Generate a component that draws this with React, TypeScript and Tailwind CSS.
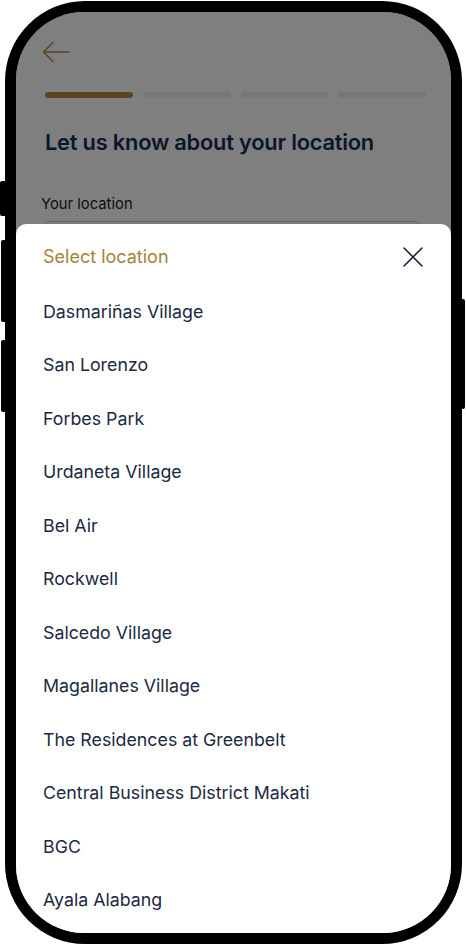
import React from 'react';

const locations = [
  'Dasmariñas Village',
  'San Lorenzo',
  'Forbes Park',
  'Urdaneta Village',
  'Bel Air',
  'Rockwell',
  'Salcedo Village',
  'Magallanes Village',
  'The Residences at Greenbelt',
  'Central Business District Makati',
  'BGC',
  'Ayala Alabang',
];

function BackArrow() {
  return (
    <svg width="28" height="22" viewBox="0 0 28 22" fill="none" stroke="#B58A41" strokeWidth="1.6" strokeLinecap="round" strokeLinejoin="round">
      <path d="M27 11H1.5M11 1.5L1.5 11l9.5 9.5" />
    </svg>
  );
}

function CloseIcon() {
  return (
    <svg width="20" height="20" viewBox="0 0 20 20" fill="none" stroke="#14243A" strokeWidth="1.6" strokeLinecap="round">
      <path d="M1 1l18 18M19 1L1 19" />
    </svg>
  );
}

export default function App() {
  return (
    <div className="relative h-[945px] w-[466px] bg-white font-['Inter',sans-serif]">
      {/* side buttons */}
      <div className="absolute left-0 top-[181px] h-[35px] w-[6px] rounded-l-[2px] bg-black" />
      <div className="absolute left-[1px] top-[240px] h-[82px] w-[5px] rounded-l-[2px] bg-black" />
      <div className="absolute left-[1px] top-[340px] h-[72px] w-[5px] rounded-l-[2px] bg-black" />
      <div className="absolute left-[461px] top-[299px] h-[110px] w-[4px] rounded-r-[2px] bg-black" />

      <div className="ml-[5px] pt-[1px]">
        <div className="h-[943px] w-[457px] rounded-[80px] bg-black p-[11px]">
          <div className="relative h-full w-full overflow-hidden rounded-[68px] bg-white">
            {/* underlying page */}
            <div className="flex flex-col pl-[29px] pr-[25px] pt-[29px]">
              <div className="-ml-[3px]">
                <BackArrow />
              </div>
              <div className="mt-[29px] flex gap-[10px]">
                <div className="h-[6px] flex-1 rounded-full bg-[#B58A41]" />
                <div className="h-[6px] flex-1 rounded-full bg-[#EFEFEF]" />
                <div className="h-[6px] flex-1 rounded-full bg-[#EFEFEF]" />
                <div className="h-[6px] flex-1 rounded-full bg-[#EFEFEF]" />
              </div>
              <h1 className="mt-[30px] text-[21.8px] font-semibold leading-[28px] tracking-[-0.2px] text-[#142E50]">
                Let us know about your location
              </h1>
              <p className="-ml-[4px] mt-[39px] text-[14.8px] leading-[18px] text-[#1b1b1b]">Your location</p>
              <div className="-ml-[4px] mr-[4px] mt-[8px] h-[52px] rounded-[8px] border border-[#c4c4c4]" />
            </div>

            {/* dim overlay */}
            <div className="absolute inset-0 bg-black/50" />

            {/* bottom sheet */}
            <div className="absolute inset-x-0 bottom-0 top-[212px] rounded-t-[10px] bg-white">
              <div className="flex h-[61px] items-center justify-between pl-[27px] pr-[28px] pt-[4px]">
                <span className="text-[18px] leading-[22px] text-[#A5823C]">Select location</span>
                <CloseIcon />
              </div>
              <ul className="flex flex-col pl-[27px]">
                {locations.map((name) => (
                  <li key={name} className="flex h-[53.5px] items-center text-[17.8px] leading-[22px] text-[#1B2A3F]">
                    {name}
                  </li>
                ))}
              </ul>
            </div>
          </div>
        </div>
      </div>
    </div>
  );
}
